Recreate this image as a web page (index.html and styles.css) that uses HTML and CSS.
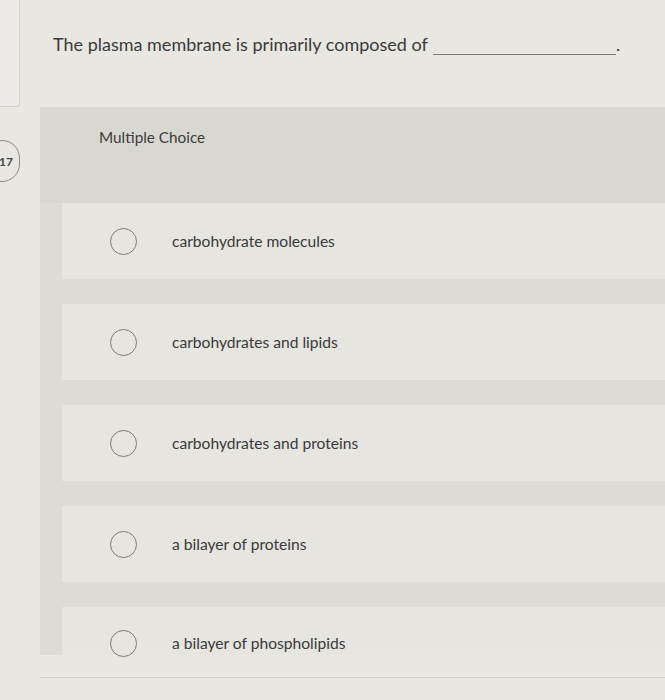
FILE: index.html
```html
<!DOCTYPE html>
<html>
<head>
<meta charset="utf-8">
<link rel="stylesheet" href="styles.css">
</head>
<body>
<div class="page">
  <aside class="rail">
    <div class="prev-card"></div>
    <div class="badge">17</div>
  </aside>
  <main class="main">
    <div class="question">
      <p class="q-text">The plasma membrane is primarily composed of <span class="blank"></span>.</p>
    </div>
    <section class="panel">
      <div class="panel-head">Multiple Choice</div>
      <ul class="options">
        <li class="option"><span class="radio"></span><span class="label">carbohydrate molecules</span></li>
        <li class="option"><span class="radio"></span><span class="label">carbohydrates and lipids</span></li>
        <li class="option"><span class="radio"></span><span class="label">carbohydrates and proteins</span></li>
        <li class="option"><span class="radio"></span><span class="label">a bilayer of proteins</span></li>
        <li class="option last"><span class="radio"></span><span class="label">a bilayer of phospholipids</span></li>
      </ul>
    </section>
    <div class="footer-line"></div>
  </main>
</div>
</body>
</html>
```

FILE: styles.css
```css
html, body {
  margin: 0;
  padding: 0;
}
body {
  width: 665px;
  height: 700px;
  overflow: hidden;
  background: #e8e7e2;
  font-family: Lato, "Liberation Sans", Arial, sans-serif;
  color: #3a3a3a;
}
.page {
  display: flex;
  height: 700px;
}
.rail {
  width: 40px;
  flex: none;
  display: flex;
  flex-direction: column;
}
.prev-card {
  width: 19px;
  height: 106px;
  background: #eceae6;
  border-right: 1px solid #d3d1cc;
  border-bottom: 1px solid #d3d1cc;
  border-bottom-right-radius: 4px;
}
.badge {
  margin-top: 33px;
  margin-left: -16px;
  width: 36px;
  height: 42px;
  box-sizing: border-box;
  border: 1px solid #8a8985;
  border-radius: 21px;
  display: flex;
  align-items: center;
  justify-content: flex-end;
  padding-right: 6px;
  font-size: 12px;
  font-weight: 700;
  color: #444;
}
.main {
  flex: 1;
  display: flex;
  flex-direction: column;
}
.question {
  height: 107px;
  padding-left: 13px;
  box-sizing: border-box;
}
.q-text {
  margin: 33px 0 0;
  font-size: 18px;
  color: #3b3b3b;
}
.blank {
  display: inline-block;
  width: 183px;
  border-bottom: 1px solid #777;
  vertical-align: -4px;
  margin-left: 1px;
}
.panel {
  background: #dddbd6;
  padding-left: 22px;
  height: 548px;
  display: flex;
  flex-direction: column;
}
.panel-head {
  height: 96px;
  flex: none;
  margin-left: -22px;
  padding-left: 59px;
  padding-top: 21px;
  box-sizing: border-box;
  background: #d9d7d2;
  font-size: 15.3px;
  color: #3c3c3c;
}
.options {
  list-style: none;
  margin: 0;
  padding: 0;
  display: flex;
  flex-direction: column;
  gap: 25px;
}
.option {
  height: 76px;
  box-sizing: border-box;
  background: #e6e5e0;
  display: flex;
  align-items: center;
  padding-left: 48px;
  padding-top: 25px;
  align-items: flex-start;
}
.option.last {
  height: 48px;
  padding-top: 23px;
}
.radio {
  width: 27px;
  height: 27px;
  box-sizing: border-box;
  border: 1.5px solid #7b7a76;
  border-radius: 50%;
  flex: none;
}
.label {
  margin-left: 35px;
  margin-top: 4px;
  font-size: 15.6px;
  color: #3a3a3a;
}
.footer-line {
  margin-top: 22px;
  border-top: 1px solid #d2d0cb;
}
```
